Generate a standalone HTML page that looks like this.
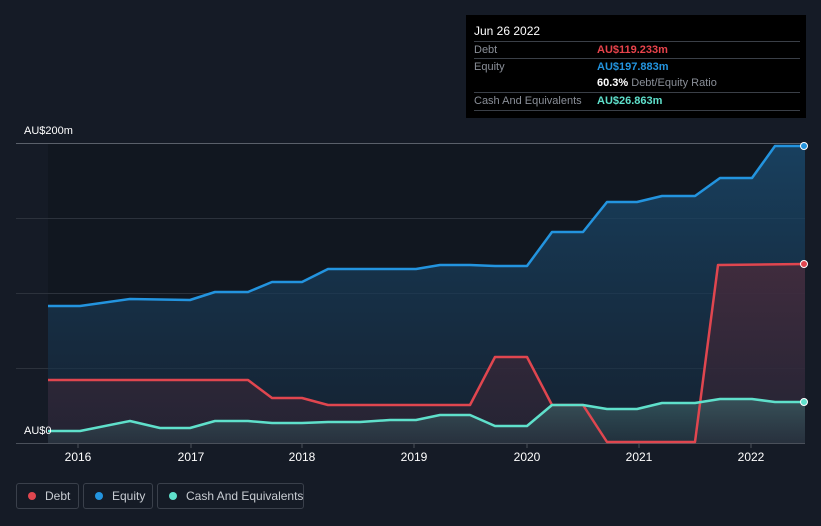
<!DOCTYPE html>
<html><head><meta charset="utf-8"><style>
body{margin:0;width:821px;height:526px;background:#151b26;font-family:"Liberation Sans",sans-serif;overflow:hidden;position:relative}
.tt{position:absolute;left:466px;top:15px;width:340px;height:103px;background:#000}
.tt .h{position:absolute;left:8px;top:9px;color:#fff;font-size:12px}
.row{position:absolute;left:8px;width:326px;font-size:11px;color:#8a8f98;border-top:1px solid #3a3f47;height:17px;line-height:17px}
.row span{position:absolute;left:123px;font-weight:bold}
.leg{position:absolute;top:483px;height:26px;border:1px solid #3a404b;border-radius:3px;color:#c8ccd2;font-size:12px;line-height:24px;box-sizing:border-box;white-space:nowrap;padding-left:28px}
.leg i{position:absolute;left:11px;top:8px;width:8px;height:8px;border-radius:50%}
.yl{position:absolute;color:#fff;font-size:11px}
.xl{position:absolute;top:450px;color:#fff;font-size:12px;width:40px;text-align:center}
</style></head><body>
<svg width="821" height="526" style="position:absolute;left:0;top:0">
<defs>
<linearGradient id="ge" x1="0" y1="0" x2="0" y2="1"><stop offset="0" stop-color="#1a4a6e" stop-opacity=".8"/><stop offset="1" stop-color="#17293d" stop-opacity=".6"/></linearGradient>
<linearGradient id="gd" x1="0" y1="0" x2="0" y2="1"><stop offset="0" stop-color="#4a2a3a" stop-opacity=".8"/><stop offset="1" stop-color="#2a2434" stop-opacity=".7"/></linearGradient>
<linearGradient id="gc" x1="0" y1="0" x2="0" y2="1"><stop offset="0" stop-color="#3d6468" stop-opacity=".7"/><stop offset="1" stop-color="#2a3a44" stop-opacity=".6"/></linearGradient>
</defs>
<rect x="48" y="143" width="757" height="300" fill="#111720"/>
<line x1="16" y1="143.5" x2="805" y2="143.5" stroke="#5a606a"/>
<line x1="16" y1="218.5" x2="805" y2="218.5" stroke="#2c323c"/>
<line x1="16" y1="293.5" x2="805" y2="293.5" stroke="#2c323c"/>
<line x1="16" y1="368.5" x2="805" y2="368.5" stroke="#2c323c"/>
<line x1="16" y1="443.5" x2="805" y2="443.5" stroke="#4a505a"/>
<g stroke="#4a505a"><line x1="78" y1="443" x2="78" y2="448"/><line x1="191" y1="443" x2="191" y2="448"/><line x1="302" y1="443" x2="302" y2="448"/><line x1="414" y1="443" x2="414" y2="448"/><line x1="527" y1="443" x2="527" y2="448"/><line x1="639" y1="443" x2="639" y2="448"/><line x1="751" y1="443" x2="751" y2="448"/></g>
<path d="M48,306 L80,306 L130,299 L190,300 L215,292 L248,292 L272,282 L302,282 L328,269 L416,269 L440,265 L470,265 L495,266 L527,266 L552,232 L583,232 L607,202 L637,202 L662,196 L695,196 L720,178 L752,178 L775,146 L805,146 L805,443 L48,443Z" fill="url(#ge)"/>
<path d="M48,380 L248,380 L272,398 L302,398 L328,405 L470,405 L495,357 L527,357 L552,405 L583,405 L607,442 L695,442 L718,265 L805,264 L805,443 L48,443Z" fill="url(#gd)"/>
<path d="M48,431 L80,431 L130,421 L160,428 L190,428 L215,421 L248,421 L272,423 L302,423 L328,422 L360,422 L390,420 L416,420 L440,415 L470,415 L495,426 L527,426 L552,405 L583,405 L607,409 L637,409 L662,403 L695,403 L720,399 L752,399 L775,402 L805,402 L805,443 L48,443Z" fill="url(#gc)"/>
<path d="M48,306 L80,306 L130,299 L190,300 L215,292 L248,292 L272,282 L302,282 L328,269 L416,269 L440,265 L470,265 L495,266 L527,266 L552,232 L583,232 L607,202 L637,202 L662,196 L695,196 L720,178 L752,178 L775,146 L805,146" fill="none" stroke="#2394df" stroke-width="2.5" stroke-linejoin="round"/>
<path d="M48,380 L248,380 L272,398 L302,398 L328,405 L470,405 L495,357 L527,357 L552,405 L583,405 L607,442 L695,442 L718,265 L805,264" fill="none" stroke="#e0464f" stroke-width="2.5" stroke-linejoin="round"/>
<path d="M48,431 L80,431 L130,421 L160,428 L190,428 L215,421 L248,421 L272,423 L302,423 L328,422 L360,422 L390,420 L416,420 L440,415 L470,415 L495,426 L527,426 L552,405 L583,405 L607,409 L637,409 L662,403 L695,403 L720,399 L752,399 L775,402 L805,402" fill="none" stroke="#5fe0cb" stroke-width="2.5" stroke-linejoin="round"/>
<circle cx="804" cy="146" r="3.5" fill="#2394df" stroke="#fff"/>
<circle cx="804" cy="264" r="3.5" fill="#e0464f" stroke="#fff"/>
<circle cx="804" cy="402" r="3.5" fill="#5fe0cb" stroke="#fff"/>
</svg>
<div class="yl" style="left:24px;top:125px">AU$200m</div>
<div class="yl" style="left:24px;top:425px">AU$0</div>
<div class="xl" style="left:58px">2016</div><div class="xl" style="left:171px">2017</div><div class="xl" style="left:282px">2018</div><div class="xl" style="left:394px">2019</div><div class="xl" style="left:507px">2020</div><div class="xl" style="left:619px">2021</div><div class="xl" style="left:731px">2022</div>
<div class="tt">
<div class="h">Jun 26 2022</div>
<div class="row" style="top:26px">Debt<span style="color:#e8434b">AU$119.233m</span></div>
<div class="row" style="top:43px">Equity<span style="color:#2394df">AU$197.883m</span></div>
<div class="row" style="top:60px;border-top:none"><span style="color:#fff">60.3% <b style="color:#8a8f98;font-weight:normal">Debt/Equity Ratio</b></span></div>
<div class="row" style="top:77px;border-bottom:1px solid #3a3f47">Cash And Equivalents<span style="color:#5fe0cb">AU$26.863m</span></div>
</div>
<div class="leg" style="left:16px;width:63px"><i style="background:#e0464f"></i>Debt</div>
<div class="leg" style="left:83px;width:70px"><i style="background:#2394df"></i>Equity</div>
<div class="leg" style="left:157px;width:147px"><i style="background:#5fe0cb"></i>Cash And Equivalents</div>
</body></html>
